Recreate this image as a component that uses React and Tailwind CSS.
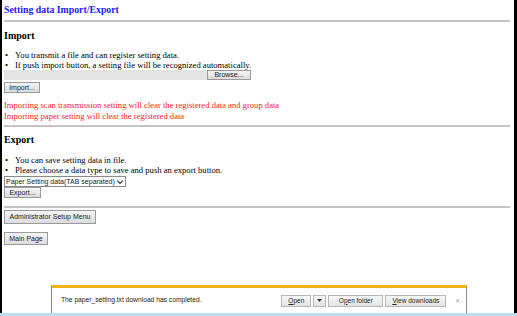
import React from "react";

const serif = { fontFamily: '"Liberation Serif", "Times New Roman", serif' };

function Btn({ children, className = "" }) {
  return (
    <button
      className={`block h-[11px] px-0 border border-[#9a9a9a] bg-gradient-to-b from-[#f4f4f4] to-[#dcdcdc] text-[7px] leading-[9px] whitespace-nowrap text-[#222] font-['Liberation_Sans',Arial,sans-serif] ${className}`}
    >
      {children}
    </button>
  );
}

function BarBtn({ children, className = "" }) {
  return (
    <button
      className={`h-[12px] border border-[#b5b5b5] bg-gradient-to-b from-[#f7f7f7] to-[#e4e4e4] text-[6.5px] leading-[10px] whitespace-nowrap text-[#222] ${className}`}
    >
      {children}
    </button>
  );
}

function Bullet({ children }) {
  return (
    <li className="flex h-[10px] leading-[10px] whitespace-nowrap">
      <span className="w-[11px] pl-[1px]">•</span>
      {children}
    </li>
  );
}

export default function App() {
  return (
    <div className="relative w-[517px] h-[316px] bg-white overflow-hidden flex flex-col">
      <div className="flex-1 border-l-2 border-r-[3px] border-black pl-[2px] pr-[4px] text-[8.6px] leading-[10px] text-black" style={serif}>
        {/* 타이틀 */}
        <h1 className="pt-[4px] text-[9.8px] leading-[12px] font-bold text-[#1a1aff]">Setting data Import/Export</h1>
        <hr className="mt-[4px] border-0 h-[2px] bg-[#c4c4c4]" />

        {/* Import */}
        <h2 className="mt-[8px] text-[10px] leading-[12px] font-bold">Import</h2>
        <ul className="mt-[8px]">
          <Bullet>You transmit a file and can register setting data.</Bullet>
          <Bullet>If push import button, a setting file will be recognized automatically.</Bullet>
        </ul>
        <div className="flex w-[247px] h-[10px] bg-[#e3e3e3]">
          <div className="flex-1" />
          <Btn className="!h-[10px] w-[44px] !leading-[8px]">Browse...</Btn>
        </div>
        <Btn className="mt-[2px] w-[36px]">Import...</Btn>

        <p className="mt-[7px] text-[#ff1a1a] leading-[11px] whitespace-nowrap">Importing scan transmission setting will clear the registered data and group data</p>
        <p className="text-[#ff1a1a] leading-[11px] whitespace-nowrap">Importing paper setting will clear the registered data</p>
        <hr className="mt-[3px] border-0 h-[2px] bg-[#c4c4c4]" />

        {/* Export */}
        <h2 className="mt-[7px] text-[10px] leading-[12px] font-bold">Export</h2>
        <ul className="mt-[9px]">
          <Bullet>You can save setting data in file.</Bullet>
          <Bullet>Please choose a data type to save and push an export button.</Bullet>
        </ul>
        <div className="mt-[1px] flex items-center w-[122px] h-[11px] border border-[#8a8a8a] text-[7px] font-['Liberation_Sans',Arial,sans-serif] text-[#222]">
          <span className="flex-1 pl-[1px] leading-[9px] whitespace-nowrap">Paper Setting data(TAB separated)</span>
          <svg width="8" height="8" viewBox="0 0 9 9" className="mr-[1px]">
            <path d="M1.5 3 L4.5 6 L7.5 3" fill="none" stroke="#333" strokeWidth="1.4" />
          </svg>
        </div>
        <Btn className="w-[37px]">Export...</Btn>
        <hr className="mt-[8px] border-0 h-[2px] bg-[#c4c4c4]" />

        <Btn className="mt-[2px] w-[92px] !h-[14px] !leading-[12px]">Administrator Setup Menu</Btn>
        <Btn className="mt-[8px] w-[44px] !h-[13px] !leading-[11px]">Main Page</Btn>
      </div>
      <div className="h-[3px] bg-[#bcdcf2]" />

      {/* 다운로드 알림 바 */}
      <div className="absolute left-[51px] top-[285px] w-[416px] h-[28px] bg-white border-l border-r border-[#8a8a8a] border-t-[3px] border-t-[#f2b21b] flex items-center font-['Liberation_Sans',Arial,sans-serif]">
        <span className="ml-[9px] flex-1 text-[6.7px] text-[#222] whitespace-nowrap">The paper_setting.txt download has completed.</span>
        <div className="flex items-center gap-[2px]">
          <BarBtn className="w-[30px]"><u>O</u>pen</BarBtn>
          <BarBtn className="w-[13px] flex items-center justify-center">
            <svg width="5" height="3" viewBox="0 0 5 3"><path d="M0 0 H5 L2.5 3 Z" fill="#333" /></svg>
          </BarBtn>
          <BarBtn className="w-[55px]">O<u>p</u>en folder</BarBtn>
          <BarBtn className="w-[61px]"><u>V</u>iew downloads</BarBtn>
        </div>
        <span className="ml-[9px] mr-[6px] text-[8px] text-[#999]">×</span>
      </div>
    </div>
  );
}
